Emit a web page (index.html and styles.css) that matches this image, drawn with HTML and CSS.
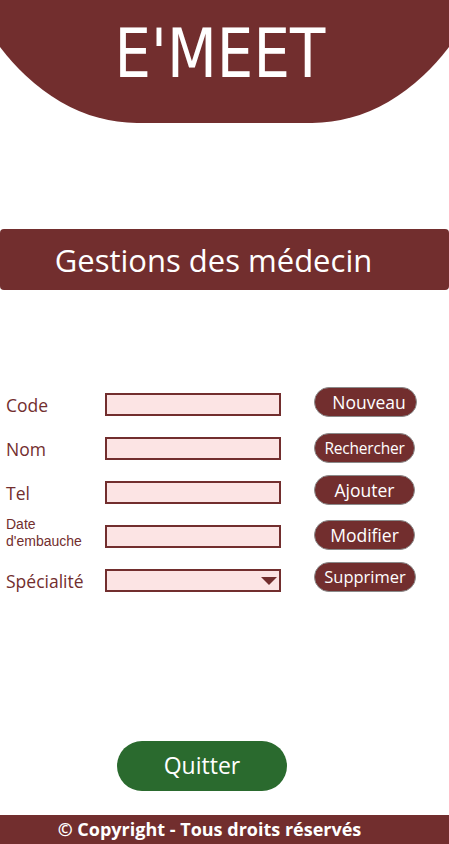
FILE: index.html
```html
<!DOCTYPE html>
<html lang="fr">
<head>
<meta charset="utf-8">
<title>E'MEET - Gestions des médecin</title>
<link rel="stylesheet" href="styles.css">
</head>
<body>
<header class="header">
  <h1 class="logo">E'MEET</h1>
</header>

<div class="title-bar">
  <h2 class="title">Gestions des médecin</h2>
</div>

<main class="form-area">
  <div class="fields">
    <div class="row">
      <label class="label">Code</label>
      <input class="input" type="text">
    </div>
    <div class="row">
      <label class="label">Nom</label>
      <input class="input" type="text">
    </div>
    <div class="row">
      <label class="label">Tel</label>
      <input class="input" type="text">
    </div>
    <div class="row">
      <label class="label label-small"><span class="line">Date</span><span class="line">d'embauche</span></label>
      <input class="input" type="text">
    </div>
    <div class="row">
      <label class="label">Spécialité</label>
      <div class="input select">
        <svg class="caret" width="16" height="8" viewBox="0 0 16 8"><path d="M0 0H16L8 8Z" fill="#722e2e"/></svg>
      </div>
    </div>
  </div>
  <div class="actions">
    <button class="btn btn-nouveau">Nouveau</button>
    <button class="btn btn-rechercher">Rechercher</button>
    <button class="btn btn-ajouter">Ajouter</button>
    <button class="btn btn-modifier">Modifier</button>
    <button class="btn btn-supprimer">Supprimer</button>
  </div>
</main>

<div class="quit-area">
  <button class="quit">Quitter</button>
</div>

<footer class="footer">© Copyright - Tous droits réservés</footer>
</body>
</html>
```

FILE: styles.css
```css
* { box-sizing: border-box; }

html, body {
  margin: 0;
  padding: 0;
  background: #ffffff;
}

body {
  width: 449px;
  height: 844px;
  overflow: hidden;
  font-family: "Open Sans", "Noto Sans", sans-serif;
  display: flex;
  flex-direction: column;
}

.header {
  position: relative;
  height: 123px;
  overflow: hidden;
  flex: none;
  display: flex;
  justify-content: center;
}

.header::before {
  content: "";
  position: absolute;
  left: -63px;
  top: -157px;
  width: 575px;
  height: 280px;
  background: #722e2e;
  border-radius: 0 0 200px 200px / 0 0 280px 280px;
}

.logo {
  position: relative;
  margin: 14px 0 0 -10px;
  font-family: "DejaVu Sans", sans-serif;
  font-weight: 400;
  font-size: 68px;
  line-height: 80px;
  color: #ffffff;
  letter-spacing: 0;
  transform: scaleX(0.85);
}

.title-bar {
  margin-top: 106px;
  height: 61px;
  background: #722e2e;
  border-radius: 4px;
  display: flex;
  align-items: center;
  justify-content: center;
  padding-right: 22px;
  flex: none;
}

.title {
  margin: 0;
  font-weight: 400;
  font-size: 31px;
  color: #ffffff;
  line-height: 40px;
}

.form-area {
  margin-top: 97px;
  display: flex;
  flex: none;
}

.fields {
  width: 314px;
  padding-top: 6px;
  padding-left: 6px;
  display: flex;
  flex-direction: column;
  gap: 21px;
}

.row {
  display: flex;
  align-items: center;
  height: 23px;
}

.label {
  width: 99px;
  color: #722e2e;
  font-size: 17.5px;
  line-height: 20px;
}

.label-small {
  display: flex;
  flex-direction: column;
  font-family: "Liberation Sans", "DejaVu Sans", sans-serif;
  font-size: 14px;
  line-height: 17px;
  margin-top: -7px;
}

.line { display: block; }

.input {
  width: 176px;
  height: 23px;
  border: 2px solid #722e2e;
  background: #fce4e4;
  margin: 0;
  padding: 0;
  outline: none;
}

.select {
  display: flex;
  align-items: center;
  justify-content: flex-end;
  padding-right: 2px;
}

.caret { display: block; }

.actions {
  display: flex;
  flex-direction: column;
}

.btn {
  width: 101px;
  height: 30px;
  border: 1px solid #8a8a8a;
  border-radius: 15px;
  background: #722e2e;
  color: #ffffff;
  font-family: "Open Sans", "Noto Sans", sans-serif;
  font-size: 17.5px;
  padding: 0;
  line-height: 26px;
}

.btn-nouveau { width: 103px; padding-left: 7px; }
.btn-rechercher { margin-top: 16px; font-size: 15.5px; letter-spacing: -0.2px; }
.btn-ajouter { margin-top: 12px; }
.btn-modifier { margin-top: 15px; }
.btn-supprimer { margin-top: 12px; width: 102px; font-size: 16.5px; }

.quit-area {
  margin-top: auto;
  padding-left: 117px;
  flex: none;
}

.quit {
  width: 170px;
  height: 50px;
  border: none;
  border-radius: 25px;
  background: #2a6a2e;
  color: #ffffff;
  font-family: "Open Sans", "Noto Sans", sans-serif;
  font-size: 23px;
  line-height: 30px;
  padding: 0 0 2px 0;
}

.footer {
  margin-top: 24px;
  height: 29px;
  background: #722e2e;
  color: #ffffff;
  font-weight: 700;
  font-size: 18px;
  line-height: 29px;
  text-align: center;
  padding-right: 30px;
  flex: none;
}
```
